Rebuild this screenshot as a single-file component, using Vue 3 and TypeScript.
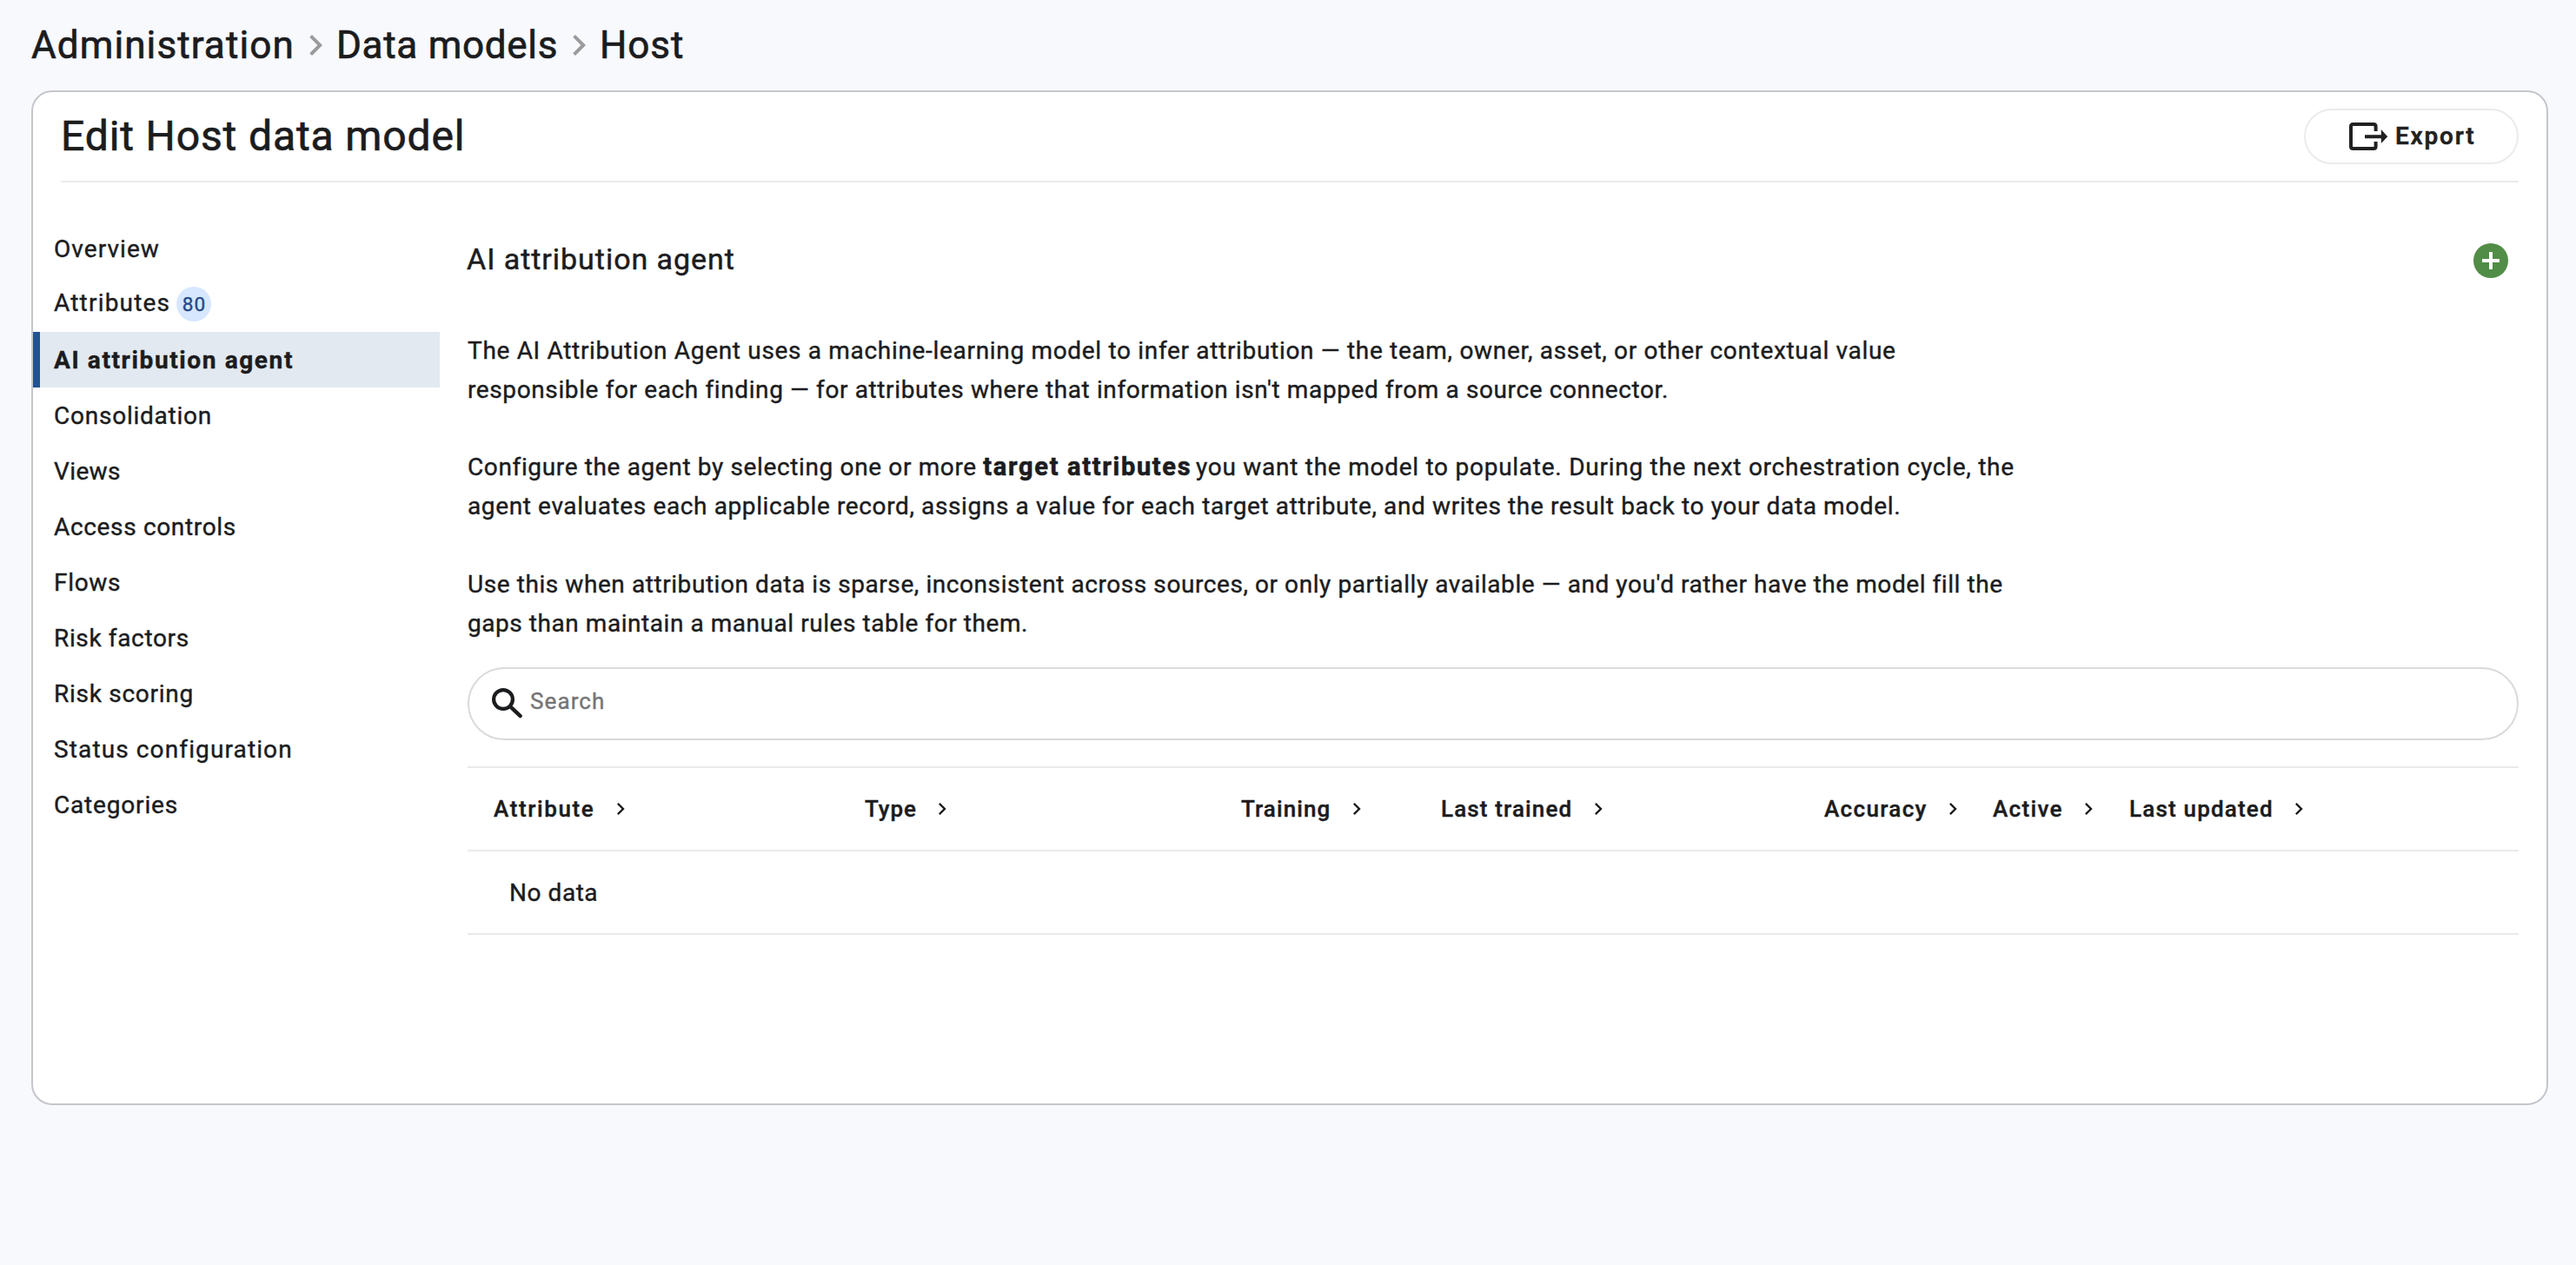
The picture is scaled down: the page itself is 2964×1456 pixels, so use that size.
<script setup lang="ts">
interface Label {
  text: string
  tracking: number
}
interface NavItem extends Label {
  badge?: string
  active?: boolean
}
interface Segment extends Label {
  strong?: boolean
}

const crumbs: Label[] = [
  { text: 'Administration', tracking: 1.1 },
  { text: 'Data models', tracking: 0.72 },
  { text: 'Host', tracking: 0.9 },
]

const navItems: NavItem[] = [
  { text: 'Overview', tracking: 1.05 },
  { text: 'Attributes', tracking: 1.2, badge: '80' },
  { text: 'AI attribution agent', tracking: 1.62, active: true },
  { text: 'Consolidation', tracking: 0.76 },
  { text: 'Views', tracking: 0.37 },
  { text: 'Access controls', tracking: 0.66 },
  { text: 'Flows', tracking: 0.7 },
  { text: 'Risk factors', tracking: 0.64 },
  { text: 'Risk scoring', tracking: 0.72 },
  { text: 'Status configuration', tracking: 1.12 },
  { text: 'Categories', tracking: 0.82 },
]

const paragraphs: Segment[][][] = [
  [
    [
      {
        text: 'The AI Attribution Agent uses a machine-learning model to infer attribution — the team, owner, asset, or other contextual value',
        tracking: 0.68,
      },
    ],
    [
      {
        text: "responsible for each finding — for attributes where that information isn't mapped from a source connector.",
        tracking: 0.615,
      },
    ],
  ],
  [
    [
      { text: 'Configure the agent by selecting one or more ', tracking: 0.635 },
      { text: 'target attributes', tracking: 1.68, strong: true },
      { text: ' you want the model to populate. During the next orchestration cycle, the', tracking: 0.74 },
    ],
    [
      {
        text: 'agent evaluates each applicable record, assigns a value for each target attribute, and writes the result back to your data model.',
        tracking: 0.62,
      },
    ],
  ],
  [
    [
      {
        text: "Use this when attribution data is sparse, inconsistent across sources, or only partially available — and you'd rather have the model fill the",
        tracking: 0.57,
      },
    ],
    [{ text: 'gaps than maintain a manual rules table for them.', tracking: 0.55 }],
  ],
]

const columns: Label[] = [
  { text: 'Attribute', tracking: 1.61 },
  { text: 'Type', tracking: 0.9 },
  { text: 'Training', tracking: 1.08 },
  { text: 'Last trained', tracking: 1.14 },
  { text: 'Accuracy', tracking: 1.35 },
  { text: 'Active', tracking: 1.33 },
  { text: 'Last updated', tracking: 1.19 },
]

const spacing = (item: Label) => ({ letterSpacing: `${item.tracking}px` })
</script>

<template>
  <div class="page">
    <nav class="crumbs">
      <template v-for="(crumb, i) in crumbs" :key="crumb.text">
        <svg v-if="i > 0" class="crumb-chevron" viewBox="0 0 24 24">
          <path d="M10 6 8.59 7.41 13.17 12l-4.58 4.59L10 18l6-6z" />
        </svg>
        <a class="crumb" :style="spacing(crumb)">{{ crumb.text }}</a>
      </template>
    </nav>

    <section class="card">
      <header class="card-head">
        <h1>Edit Host data model</h1>
        <button class="export" type="button">
          <svg class="export-icon" viewBox="0 0 44 32">
            <path
              d="M30.6 10V4.5Q30.6 2 28.1 2H4.5Q2 2 2 4.5v23Q2 30 4.5 30h23.6q2.5 0 2.5-2.5V22M18 16.2h20"
              fill="none"
              stroke="currentColor"
              stroke-width="4"
            />
            <path d="M36.8 8 44.2 16.2 36.8 24z" fill="currentColor" />
          </svg>
          <span class="export-label">Export</span>
        </button>
      </header>

      <div class="body">
        <aside class="side">
          <a v-for="item in navItems" :key="item.text" class="nav" :class="{ active: item.active, badged: item.badge }">
            <span class="nav-label" :style="spacing(item)">{{ item.text }}</span>
            <span v-if="item.badge" class="badge">{{ item.badge }}</span>
          </a>
        </aside>

        <main class="main">
          <div class="main-head">
            <h2>AI attribution agent</h2>
            <button class="add" type="button" aria-label="Add">
              <svg viewBox="0 0 40 40"><path d="M10 20h20M20 10v20" stroke="#fff" stroke-width="4" /></svg>
            </button>
          </div>

          <div class="copy">
            <p v-for="(lines, p) in paragraphs" :key="p">
              <span v-for="(line, l) in lines" :key="l" class="line"
                ><template v-for="(seg, s) in line" :key="s"
                  ><strong v-if="seg.strong" :style="spacing(seg)">{{ seg.text }}</strong
                  ><span v-else :style="spacing(seg)">{{ seg.text }}</span></template
                ></span
              >
            </p>
          </div>

          <div class="search">
            <svg class="search-icon" viewBox="0 0 36 36" fill="none" stroke="currentColor">
              <circle cx="13" cy="13" r="10.9" stroke-width="4.2" />
              <path d="m22.6 22.6 10.1 9.5" stroke-width="4.4" stroke-linecap="round" />
            </svg>
            <span class="placeholder">Search</span>
          </div>

          <div class="table">
            <div class="thead">
              <div v-for="col in columns" :key="col.text" class="th">
                <span :style="spacing(col)">{{ col.text }}</span>
                <svg class="sort" viewBox="0 0 24 24">
                  <path d="M10 6 8.59 7.41 13.17 12l-4.58 4.59L10 18l6-6z" />
                </svg>
              </div>
            </div>
            <div class="empty">No data</div>
          </div>
        </main>
      </div>
    </section>
  </div>
</template>

<style>
body {
  background: #f8f9fd;
}
</style>

<style scoped>
.page {
  box-sizing: border-box;
  min-height: 1456px;
  padding: 0 32px 0 36px;
  background: #f8f9fd;
  color: #1b1c1e;
  font-family: Roboto, 'Liberation Sans', sans-serif;
  font-size: 28px;
  white-space: nowrap;
  -webkit-text-stroke: 0.4px currentColor;
}
h1,
h2,
p {
  margin: 0;
  font-weight: 400;
}
svg {
  display: block;
  flex: none;
}
button {
  font: inherit;
  color: inherit;
  padding: 0;
}

.crumbs {
  display: flex;
  align-items: center;
  height: 104px;
  font-size: 44px;
  -webkit-text-stroke-width: 0.7px;
}
.crumb {
  width: 303px;
}
.crumb:nth-of-type(2) {
  width: 255px;
}
.crumb:last-child {
  width: auto;
}
.crumb-chevron {
  width: 48px;
  height: 48px;
  fill: #9b9b9b;
}

.card {
  box-sizing: border-box;
  height: 1168px;
  border: 2px solid #c5c6cb;
  border-radius: 24px;
  background: #fff;
}
.card-head {
  display: flex;
  align-items: center;
  justify-content: space-between;
  height: 102px;
  margin: 0 32px;
  border-bottom: 2px solid #eaeaea;
}
h1 {
  padding-bottom: 2px;
  font-size: 48px;
  letter-spacing: 0.88px;
  -webkit-text-stroke-width: 0.7px;
}
.export {
  box-sizing: border-box;
  display: flex;
  align-items: center;
  gap: 9px;
  width: 247px;
  height: 64px;
  padding-left: 50px;
  border: 2px solid #ebebeb;
  border-radius: 32px;
  background: #fff;
  color: #212121;
  font-weight: 600;
  letter-spacing: 1.8px;
}
.export-icon {
  width: 44px;
  height: 32px;
  overflow: visible;
}
.export-label {
  padding-bottom: 2px;
}

.body {
  display: flex;
  gap: 32px;
  padding-right: 32px;
}
.side {
  flex: none;
  width: 468px;
  padding-top: 44px;
}
.nav {
  box-sizing: border-box;
  display: flex;
  align-items: center;
  height: 64px;
  padding-left: 16px;
  border-left: 8px solid transparent;
}
.nav.active {
  border-left-color: #225493;
  background: #e3e9f1;
  font-weight: 700;
}
.badged .nav-label {
  width: 141px;
  padding-bottom: 3px;
}
.badge {
  width: 40px;
  height: 40px;
  border-radius: 50%;
  background: #d6e7ff;
  color: #224a87;
  font-size: 22.5px;
  line-height: 40px;
  letter-spacing: 1.2px;
  text-indent: 1px;
  text-align: center;
}

.main {
  flex: 1;
  min-width: 0;
  padding-top: 70px;
}
.main-head {
  display: flex;
  align-items: center;
  justify-content: space-between;
  height: 40px;
  padding-right: 12px;
}
h2 {
  margin-left: -1px;
  padding-bottom: 5px;
  font-size: 34px;
  letter-spacing: 0.96px;
  -webkit-text-stroke-width: 0.5px;
}
.add {
  width: 40px;
  height: 40px;
  border: 0;
  border-radius: 50%;
  background: #518d47;
}
.copy {
  height: 386px;
  margin-top: 62px;
  line-height: 44.8px;
}
.copy p {
  margin-bottom: 44.8px;
}
.line {
  display: block;
  white-space: pre;
}
strong {
  margin-right: -3px;
  font-size: 29px;
  font-weight: 700;
  line-height: 1;
  -webkit-text-stroke-width: 0.6px;
}

.search {
  box-sizing: border-box;
  display: flex;
  align-items: center;
  height: 84px;
  padding-left: 26px;
  border: 2px solid #dadada;
  border-radius: 42px;
}
.search-icon {
  width: 36px;
  height: 36px;
}
.placeholder {
  padding: 0 0 6px 8px;
  color: #757575;
  font-size: 26px;
  letter-spacing: 1.1px;
}

.table {
  margin-top: 30px;
  border-bottom: 2px solid #eaeaea;
}
.thead {
  display: grid;
  grid-template-columns: 427px 433px 230px 441px 194px 157px 1fr;
}
.thead,
.empty {
  height: 94px;
  border-top: 2px solid #eaeaea;
}
.th {
  display: flex;
  align-items: center;
  gap: 15.5px;
  padding-left: 30px;
  font-size: 26px;
  font-weight: 500;
}
.sort {
  width: 28px;
  height: 28px;
  fill: #1b1c1e;
}
.empty {
  padding-left: 48px;
  line-height: 96px;
  letter-spacing: 0.55px;
}
</style>
